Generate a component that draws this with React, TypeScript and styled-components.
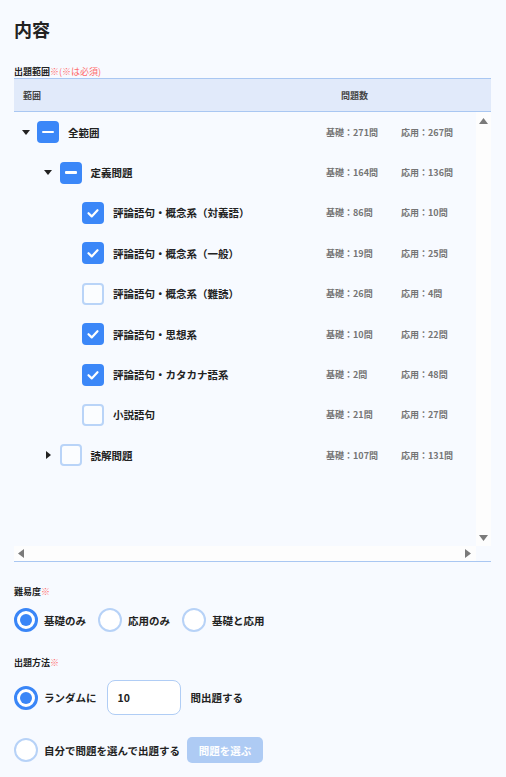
import React from 'react';
import styled, { createGlobalStyle } from 'styled-components';

const GlobalStyle = createGlobalStyle`
	html, body {
		margin: 0;
		padding: 0;
		background: #f7faff;
	}
	body {
		font-family: 'Noto Sans CJK JP', 'Noto Sans', sans-serif;
		color: #222;
	}
`;

const Page = styled.div`
	padding: 16px 15px 0 14px;
	min-height: 777px;
	box-sizing: border-box;
	background: #f7faff;
`;

const Title = styled.h1`
	margin: 0;
	font-size: 18px;
	line-height: 27px;
	font-weight: 700;
	color: #222;
`;

const FieldLabel = styled.div<{ $top: number }>`
	margin-top: ${p => p.$top}px;
	font-size: 9px;
	line-height: 13px;
	font-weight: 700;
	color: #222;
	span {
		color: #ff6b6b;
		font-weight: 400;
	}
`;

const TableHead = styled.div`
	display: flex;
	align-items: center;
	height: 32px;
	background: #e1eafa;
	border-top: 1px solid #a9c7f2;
	border-bottom: 1px solid #a9c7f2;
	font-size: 9px;
	font-weight: 700;
	color: #444;
	.range {
		width: 312px;
		padding-left: 9px;
		box-sizing: border-box;
	}
	.count {
		padding-left: 15px;
	}
`;

const TreeBody = styled.div`
	height: 449px;
	display: grid;
	grid-template-columns: 1fr 15px;
	grid-template-rows: 1fr 15px;
	border-bottom: 1px solid #a9c7f2;
`;

const TreeContent = styled.div`
	overflow: hidden;
`;

const ScrollTrack = styled.div<{ $vertical?: boolean }>`
	background: #fdfdfd;
	display: flex;
	flex-direction: ${p => (p.$vertical ? 'column' : 'row')};
	justify-content: space-between;
	align-items: center;
	padding: ${p => (p.$vertical ? '6px 0 5px' : '0 5px 0 4px')};
	box-sizing: border-box;
`;

const Row = styled.div<{ $level: number }>`
	display: flex;
	align-items: center;
	height: 40.4px;
	padding-left: ${p => p.$level * 22.5}px;
	box-sizing: border-box;
`;

const Toggle = styled.div`
	width: 23px;
	display: flex;
	justify-content: center;
	align-items: center;
	flex-shrink: 0;
`;

const Box = styled.div<{ $on: boolean }>`
	width: 22px;
	height: 22px;
	border-radius: 4px;
	box-sizing: border-box;
	flex-shrink: 0;
	display: flex;
	align-items: center;
	justify-content: center;
	background: ${p => (p.$on ? '#3b87f8' : '#fbfdff')};
	border: ${p => (p.$on ? 'none' : '2px solid #b9d4f8')};
`;

const Dash = styled.div`
	width: 12px;
	height: 2.5px;
	border-radius: 1px;
	background: #fff;
`;

const Label = styled.div`
	flex: 1;
	margin-left: 9px;
	font-size: 10.5px;
	font-weight: 700;
	color: #222;
	white-space: nowrap;
`;

const Count = styled.div`
	width: 75px;
	flex-shrink: 0;
	font-size: 9px;
	font-weight: 700;
	color: #757575;
	white-space: nowrap;
`;

const OptionRow = styled.div<{ $top: number }>`
	display: flex;
	align-items: center;
	margin-top: ${p => p.$top}px;
`;

const Radio = styled.div<{ $on: boolean }>`
	width: 24px;
	height: 24px;
	border-radius: 50%;
	box-sizing: border-box;
	flex-shrink: 0;
	background: #fff;
	border: ${p => (p.$on ? '3px solid #3a86f7' : '2px solid #b7d2f7')};
	display: flex;
	align-items: center;
	justify-content: center;
	&::after {
		content: '';
		display: ${p => (p.$on ? 'block' : 'none')};
		width: 12px;
		height: 12px;
		border-radius: 50%;
		background: #3a86f7;
	}
`;

const OptionText = styled.span<{ $gap?: number; $lead?: number }>`
	margin-left: ${p => p.$lead ?? 6}px;
	margin-right: ${p => p.$gap ?? 12}px;
	font-size: 10.5px;
	font-weight: 700;
	color: #222;
	white-space: nowrap;
`;

const NumberInput = styled.div`
	width: 74px;
	height: 35px;
	box-sizing: border-box;
	border: 1px solid #b0cdf5;
	border-radius: 8px;
	background: #fff;
	display: flex;
	align-items: center;
	padding-left: 10px;
	margin-right: 10px;
	font-size: 10.5px;
	font-weight: 700;
	color: #222;
`;

const PickButton = styled.button`
	width: 76px;
	height: 26px;
	border: none;
	border-radius: 5px;
	background: #aecbf4;
	color: #fff;
	font-family: inherit;
	font-size: 10.5px;
	font-weight: 700;
	padding: 0;
	margin-left: -5px;
`;

const Caret = ({ open }: { open: boolean }) =>
	open ? (
		<svg width="8" height="5" viewBox="0 0 8 5">
			<path d="M0 0H8L4 5Z" fill="#222" />
		</svg>
	) : (
		<svg width="5" height="8" viewBox="0 0 5 8">
			<path d="M0 0V8L5 4Z" fill="#222" />
		</svg>
	);

const Arrow = ({ dir }: { dir: 'up' | 'down' | 'left' | 'right' }) => {
	const d = {
		up: 'M0 6L4.5 0L9 6Z',
		down: 'M0 0H9L4.5 6Z',
		left: 'M6 0V9L0 4.5Z',
		right: 'M0 0V9L6 4.5Z',
	}[dir];
	const flat = dir === 'up' || dir === 'down';
	return (
		<svg width={flat ? 9 : 6} height={flat ? 6 : 9} viewBox={flat ? '0 0 9 6' : '0 0 6 9'}>
			<path d={d} fill="#7a7a7a" />
		</svg>
	);
};

type State = 'on' | 'off' | 'some';

type Item = {
	level: number;
	label: string;
	state: State;
	caret?: 'open' | 'closed';
	basic: number;
	applied: number;
};

const items: Item[] = [
	{ level: 0, label: '全範囲', state: 'some', caret: 'open', basic: 271, applied: 267 },
	{ level: 1, label: '定義問題', state: 'some', caret: 'open', basic: 164, applied: 136 },
	{ level: 2, label: '評論語句・概念系（対義語）', state: 'on', basic: 86, applied: 10 },
	{ level: 2, label: '評論語句・概念系（一般）', state: 'on', basic: 19, applied: 25 },
	{ level: 2, label: '評論語句・概念系（難読）', state: 'off', basic: 26, applied: 4 },
	{ level: 2, label: '評論語句・思想系', state: 'on', basic: 10, applied: 22 },
	{ level: 2, label: '評論語句・カタカナ語系', state: 'on', basic: 2, applied: 48 },
	{ level: 2, label: '小説語句', state: 'off', basic: 21, applied: 27 },
	{ level: 1, label: '読解問題', state: 'off', caret: 'closed', basic: 107, applied: 131 },
];

const CheckBox = ({ state }: { state: State }) => (
	<Box $on={state !== 'off'}>
		{state === 'on' && (
			<svg width="22" height="22" viewBox="0 0 22 22">
				<path
					d="M6.5 11.2l3.2 3.2 5.8-6.2"
					fill="none"
					stroke="#fff"
					strokeWidth="2.2"
					strokeLinecap="round"
					strokeLinejoin="round"
				/>
			</svg>
		)}
		{state === 'some' && <Dash />}
	</Box>
);

export default function App() {
	return (
		<Page>
			<GlobalStyle />
			<Title>内容</Title>
			<FieldLabel $top={22}>
				出題範囲<span>※(※は必須)</span>
			</FieldLabel>
			<TableHead>
				<div className="range">範囲</div>
				<div className="count">問題数</div>
			</TableHead>
			<TreeBody>
				<TreeContent>
					{items.map(item => (
						<Row key={item.label} $level={item.level}>
							<Toggle>{item.caret && <Caret open={item.caret === 'open'} />}</Toggle>
							<CheckBox state={item.state} />
							<Label>{item.label}</Label>
							<Count>基礎：{item.basic}問</Count>
							<Count>応用：{item.applied}問</Count>
						</Row>
					))}
				</TreeContent>
				<ScrollTrack $vertical>
					<Arrow dir="up" />
					<Arrow dir="down" />
				</ScrollTrack>
				<ScrollTrack>
					<Arrow dir="left" />
					<Arrow dir="right" />
				</ScrollTrack>
				<div />
			</TreeBody>

			<FieldLabel $top={23}>
				難易度<span>※</span>
			</FieldLabel>
			<OptionRow $top={10}>
				<Radio $on />
				<OptionText>基礎のみ</OptionText>
				<Radio $on={false} />
				<OptionText>応用のみ</OptionText>
				<Radio $on={false} />
				<OptionText>基礎と応用</OptionText>
			</OptionRow>

			<FieldLabel $top={24}>
				出題方法<span>※</span>
			</FieldLabel>
			<OptionRow $top={11}>
				<Radio $on />
				<OptionText $gap={10}>ランダムに</OptionText>
				<NumberInput>10</NumberInput>
				<OptionText $gap={0} $lead={0}>
					問出題する
				</OptionText>
			</OptionRow>
			<OptionRow $top={22}>
				<Radio $on={false} />
				<OptionText>自分で問題を選んで出題する</OptionText>
				<PickButton>問題を選ぶ</PickButton>
			</OptionRow>
		</Page>
	);
}
